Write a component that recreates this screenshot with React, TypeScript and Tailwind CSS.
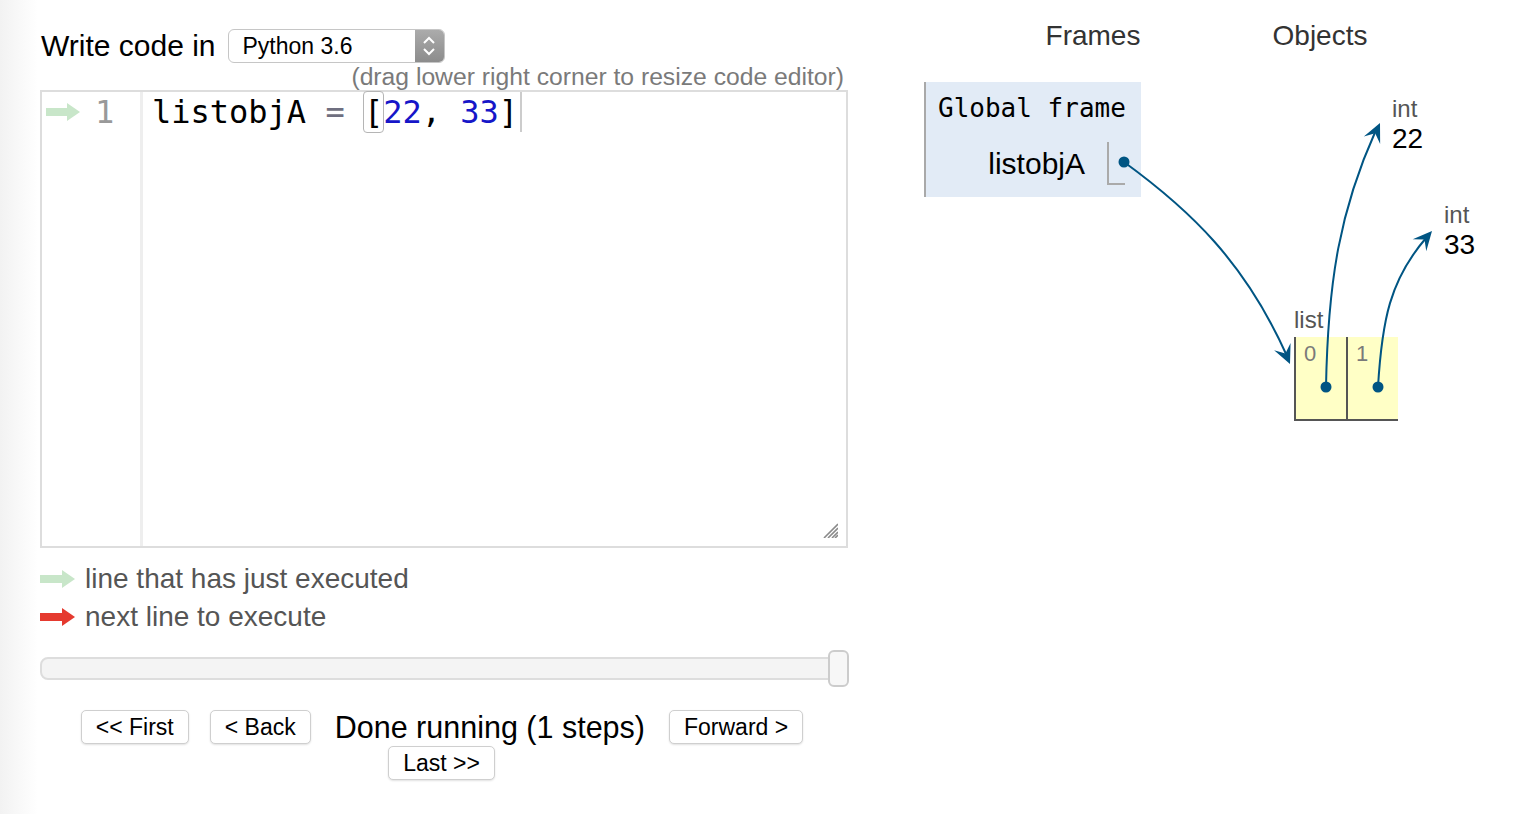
import React from 'react';

const BLUE = '#005583';

// arrowhead polygon for a tip and a direction
function head(tx: number, ty: number, dx: number, dy: number) {
  const L = 19;
  const W = 9;
  const len = Math.hypot(dx, dy);
  const ux = dx / len;
  const uy = dy / len;
  const px = -uy;
  const py = ux;
  return [
    [tx, ty],
    [tx - L * ux + W * px, ty - L * uy + W * py],
    [tx - 0.6 * L * ux, ty - 0.6 * L * uy],
    [tx - L * ux - W * px, ty - L * uy - W * py],
  ]
    .map((p) => p.join(','))
    .join(' ');
}

function LegendArrow({ color }: { color: string }) {
  return (
    <svg width="35" height="20" viewBox="0 0 35 20">
      <rect x="0" y="6" width="23" height="8" fill={color} />
      <polygon points="22,1 35,10 22,19" fill={color} />
    </svg>
  );
}

function Button({ label }: { label: string }) {
  return (
    <button className="h-[34px] px-[14px] rounded-[5px] border border-[#cfcfcf] bg-white text-[23px] leading-none text-black shadow-[0_1px_2px_rgba(0,0,0,0.12)]">
      {label}
    </button>
  );
}

export default function App() {
  return (
    <div className="flex w-[1540px] min-h-[814px] bg-[linear-gradient(to_right,#f2f2f2,#ffffff_38px)] font-['Liberation_Sans',Arial,sans-serif]">
      {/* Editor side */}
      <div className="ml-[40px] w-[810px] flex flex-col pt-[29px]">
        <div className="flex items-center h-[34px]">
          <span className="ml-[1px] text-[30px] leading-none text-black mr-[12px]">Write code in</span>
          <div className="flex w-[217px] h-[34px] rounded-[6px] border border-[#c6c6c6] overflow-hidden bg-white">
            <span className="flex-1 pl-[14px] text-[23px] leading-[32px] text-black">Python 3.6</span>
            <div className="w-[29px] bg-linear-to-b from-[#ababab] to-[#8c8c8c] flex items-center justify-center">
              <svg width="14" height="22" viewBox="-7 -11 14 22" fill="none" stroke="white" strokeWidth="2">
                <path d="M-5 -3 L0 -8 L5 -3" />
                <path d="M-5 3 L0 8 L5 3" />
              </svg>
            </div>
          </div>
        </div>

        <div className="h-[27px] w-[808px] text-right pr-[4px] text-[24.7px] leading-[27px] text-[#7a7a7a]">
          (drag lower right corner to resize code editor)
        </div>

        {/* Code editor */}
        <div className="relative flex w-[808px] h-[458px] border-2 border-[#dddddd] bg-white">
          <div className="w-[101px] h-full border-r-[3px] border-[#eeeeee]">
            <div className="flex items-center h-[40px] pl-[4px]">
              <svg width="34" height="20" viewBox="0 0 34 20">
                <rect x="0" y="6" width="22" height="8" fill="#c8e6c9" />
                <polygon points="21,1 34,10 21,19" fill="#c8e6c9" />
              </svg>
              <span className="ml-[15px] font-['DejaVu_Sans_Mono',monospace] text-[32px] leading-[40px] text-[#999999]">1</span>
            </div>
          </div>
          <div className="flex-1 pl-[9px]">
            <div className="h-[40px] leading-[40px] font-['DejaVu_Sans_Mono',monospace] text-[32px] text-black whitespace-pre">
              <span>listobjA </span>
              <span className="text-[#6f6f80]">=</span>
              <span> </span>
              <span className="inline-block h-[40px] rounded-[3px] outline outline-[#b5b5b5] align-top">[</span>
              <span className="text-[#1616c8]">22</span>
              <span>, </span>
              <span className="text-[#1616c8]">33</span>
              <span>]</span>
              <span className="inline-block w-[2px] h-[40px] bg-[#cccccc] align-top ml-[2px]" />
            </div>
          </div>
          <svg className="absolute right-[8px] bottom-[8px]" width="15" height="15" viewBox="0 0 15 15" stroke="#8a8a8a" strokeWidth="1.6">
            <line x1="15" y1="1" x2="1" y2="15" />
            <line x1="15" y1="5" x2="5" y2="15" />
            <line x1="15" y1="9" x2="9" y2="15" />
            <line x1="15" y1="12" x2="12" y2="15" />
          </svg>
        </div>

        {/* Legend */}
        <div className="mt-[12px] flex items-center h-[38px]">
          <LegendArrow color="#c8e6c9" />
          <span className="ml-[10px] text-[28px] leading-none text-[#555555]">line that has just executed</span>
        </div>
        <div className="flex items-center h-[38px]">
          <LegendArrow color="#e53a2f" />
          <span className="ml-[10px] text-[28px] leading-none text-[#555555]">next line to execute</span>
        </div>

        {/* Slider */}
        <div className="relative mt-[21px] w-[809px] h-[23px] rounded-[8px] border-2 border-[#dddddd] bg-[#f4f4f4]">
          <div className="absolute -top-[9px] -right-[2px] w-[21px] h-[37px] rounded-[6px] border-2 border-[#cccccc] bg-[#f7f7f7]" />
        </div>

        {/* Navigation */}
        <div className="mt-[30px] flex items-center justify-center gap-[21px] pr-[6px] h-[34px]">
          <Button label="<< First" />
          <Button label="< Back" />
          <span className="mx-[3px] text-[30.5px] leading-none text-black">Done running (1 steps)</span>
          <Button label="Forward >" />
        </div>
        <div className="mt-[2px] flex justify-center pr-[7px]">
          <Button label="Last >>" />
        </div>
      </div>

      {/* Visualization side */}
      <div className="relative ml-[74px] w-[616px] h-[814px]">
        <div className="flex h-[72px] items-center text-[28px] text-[#333333]">
          <div className="ml-[60px] w-[218px] text-center">Frames</div>
          <div className="w-[236px] text-center">Objects</div>
        </div>

        <div className="mt-[10px] w-[217px] h-[115px] bg-[#e2ebf6] border-l-2 border-[#a9a9a9] pt-[10px]">
          <div className="pl-[12px] h-[32px] leading-[32px] font-['DejaVu_Sans_Mono',monospace] text-[26px] text-black whitespace-pre">
            Global frame
          </div>
          <div className="mt-[18px] flex items-center justify-end pr-[16px] h-[43px]">
            <span className="mr-[22px] text-[30px] leading-none text-black">listobjA</span>
            <div className="w-[18px] h-[43px] border-l-2 border-b-2 border-[#aaaaaa]" />
          </div>
        </div>

        {/* Heap objects */}
        <div className="absolute left-[468px] top-[95px]">
          <div className="h-[28px] leading-[28px] text-[24px] text-[#555555]">int</div>
          <div className="h-[32px] leading-[32px] text-[28px] text-black">22</div>
        </div>
        <div className="absolute left-[520px] top-[201px]">
          <div className="h-[28px] leading-[28px] text-[24px] text-[#555555]">int</div>
          <div className="h-[32px] leading-[32px] text-[28px] text-black">33</div>
        </div>
        <div className="absolute left-[370px] top-[306px]">
          <div className="h-[28px] leading-[28px] text-[24px] text-[#555555]">list</div>
          <div className="mt-[3px] flex h-[84px] border-b-2 border-[#555555]">
            {['0', '1'].map((i) => (
              <div key={i} className="w-[52px] h-full bg-[#ffffc6] border-l-2 border-[#555555] pl-[8px] pt-[3px]">
                <span className="text-[22px] leading-[28px] text-[#7a7a7a]">{i}</span>
              </div>
            ))}
          </div>
        </div>

        <svg
          className="absolute left-0 top-0 pointer-events-none"
          width="616"
          height="814"
          viewBox="924 0 616 814"
          fill="none"
        >
          <path d="M1124,162 C1190,210 1245,262 1287,356" stroke={BLUE} strokeWidth="2" />
          <polygon points={head(1290, 364, 45, 102)} fill={BLUE} />
          <circle cx="1124" cy="162" r="5.5" fill={BLUE} />

          <path d="M1326,387 C1328,280 1340,210 1376,130" stroke={BLUE} strokeWidth="2" />
          <polygon points={head(1380, 123, 40, -86)} fill={BLUE} />
          <circle cx="1326" cy="387" r="5.5" fill={BLUE} />

          <path d="M1378,387 C1382,320 1390,280 1426,238" stroke={BLUE} strokeWidth="2" />
          <polygon points={head(1432, 231, 42, -48)} fill={BLUE} />
          <circle cx="1378" cy="387" r="5.5" fill={BLUE} />
        </svg>
      </div>
    </div>
  );
}
